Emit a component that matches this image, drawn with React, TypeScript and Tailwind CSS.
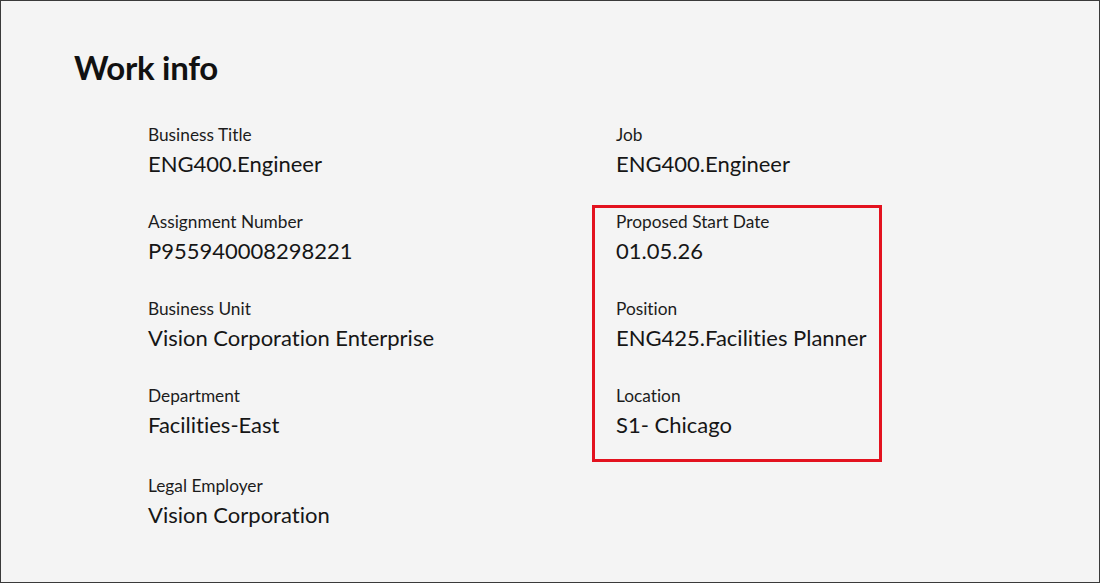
import React from "react";

type Field = { label: string; value: string };

const leftFields: Field[] = [
  { label: "Business Title", value: "ENG400.Engineer" },
  { label: "Assignment Number", value: "P955940008298221" },
  { label: "Business Unit", value: "Vision Corporation Enterprise" },
  { label: "Department", value: "Facilities-East" },
  { label: "Legal Employer", value: "Vision Corporation" },
];

const highlighted: Field[] = [
  { label: "Proposed Start Date", value: "01.05.26" },
  { label: "Position", value: "ENG425.Facilities Planner" },
  { label: "Location", value: "S1- Chicago" },
];

function InfoField({ field }: { field: Field }) {
  return (
    <div className="flex flex-col h-[87px]">
      <span className="text-[17.3px] leading-[20px] text-[#1c1c1c]">{field.label}</span>
      <span className="mt-[4px] text-[22px] leading-[30px] text-[#161616]">{field.value}</span>
    </div>
  );
}

export default function App() {
  return (
    <div
      className="w-[1100px] h-[583px] bg-[#f4f4f4] border border-[#3a3a3a] overflow-hidden [font-variant-ligatures:none]"
      style={{ fontFamily: "Lato, 'Open Sans', sans-serif" }}
    >
      <div className="pl-[73px] pt-[46px]">
        <h1 className="text-[33px] leading-[40px] font-bold text-[#111] tracking-[-0.3px]">Work info</h1>
      </div>

      <div className="flex pl-[147px] pt-[38px]">
        {/* Left column */}
        <div className="w-[468px] flex flex-col">
          {leftFields.map((f, i) => (
            <div key={f.label} className={i === 4 ? "mt-[3px]" : ""}>
              <InfoField field={f} />
            </div>
          ))}
        </div>

        {/* Right column */}
        <div className="flex flex-col">
          <InfoField field={{ label: "Job", value: "ENG400.Engineer" }} />
          <div className="-ml-[24px] -mt-[7px] w-[290px] border-[3px] border-[#e3121f] pl-[21px] pt-[4px]">
            {highlighted.map((f, i) => (
              <div key={f.label} className={i === 2 ? "h-[73px] overflow-hidden" : ""}>
                <InfoField field={f} />
              </div>
            ))}
          </div>
        </div>
      </div>
    </div>
  );
}
